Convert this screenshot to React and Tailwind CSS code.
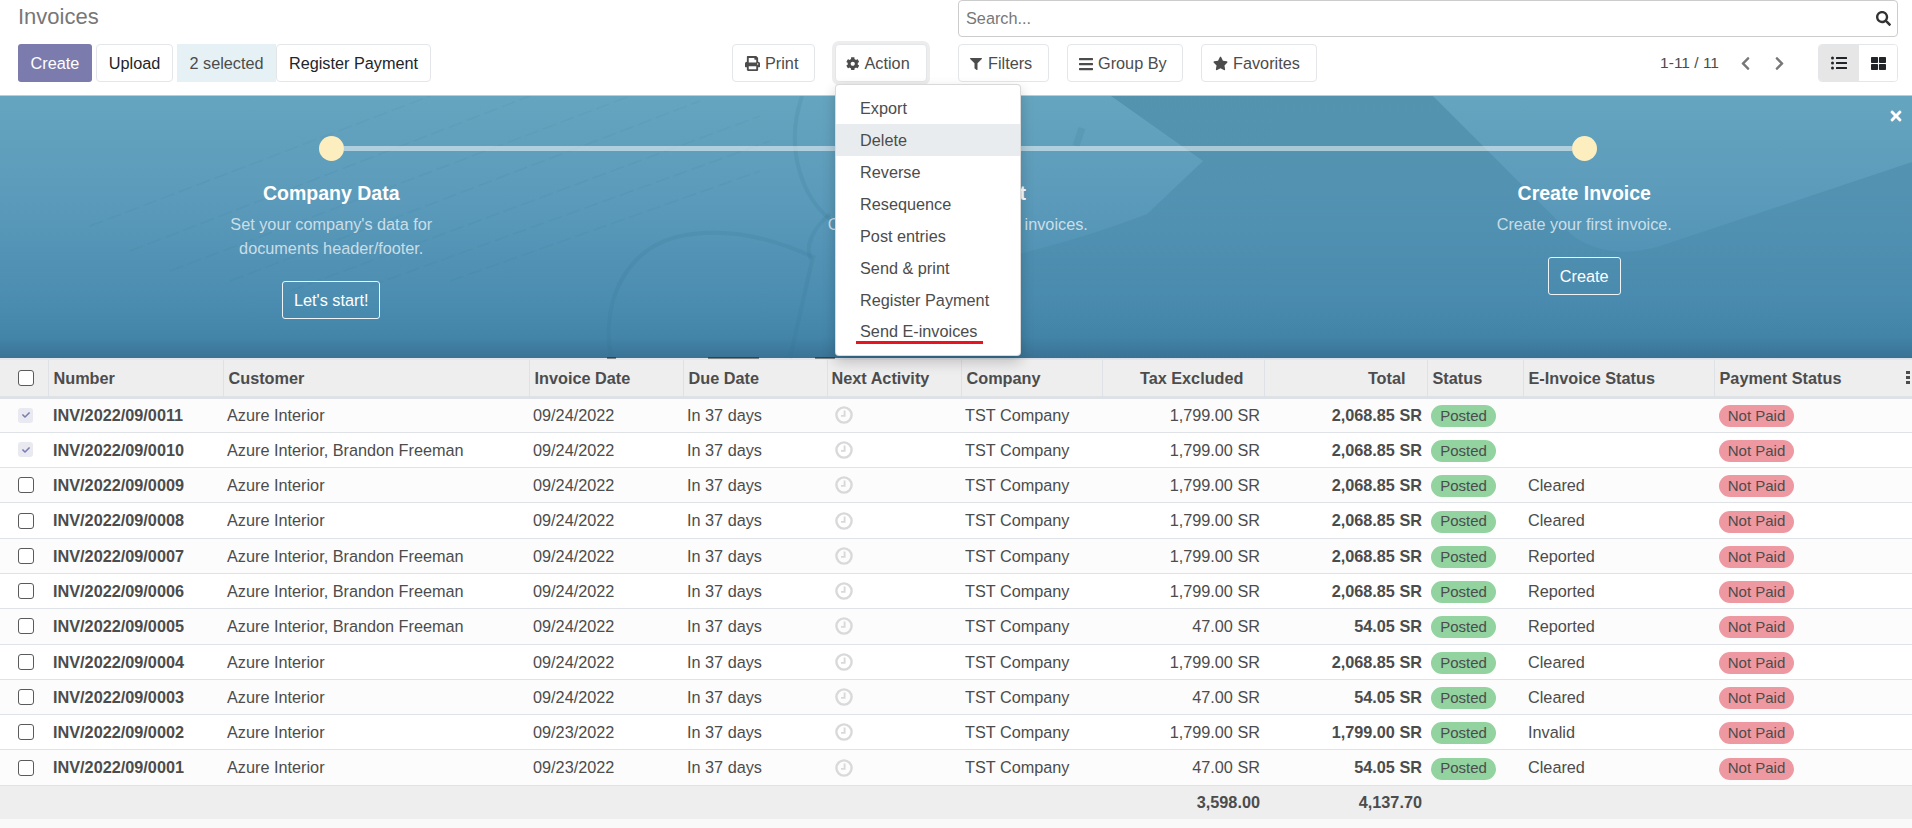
import React from 'react';
import {
  FaPrint, FaCog, FaFilter, FaBars, FaStar, FaSearch, FaChevronLeft, FaChevronRight,
  FaListUl, FaThLarge, FaTimes, FaCheck,
} from 'react-icons/fa';

const AZ = 'Azure Interior';
const AZB = 'Azure Interior, Brandon Freeman';

const invoices = [
  { no: '0011', customer: AZ, date: '09/24/2022', tax: '1,799.00', total: '2,068.85', einv: '', checked: true },
  { no: '0010', customer: AZB, date: '09/24/2022', tax: '1,799.00', total: '2,068.85', einv: '', checked: true },
  { no: '0009', customer: AZ, date: '09/24/2022', tax: '1,799.00', total: '2,068.85', einv: 'Cleared' },
  { no: '0008', customer: AZ, date: '09/24/2022', tax: '1,799.00', total: '2,068.85', einv: 'Cleared' },
  { no: '0007', customer: AZB, date: '09/24/2022', tax: '1,799.00', total: '2,068.85', einv: 'Reported' },
  { no: '0006', customer: AZB, date: '09/24/2022', tax: '1,799.00', total: '2,068.85', einv: 'Reported' },
  { no: '0005', customer: AZB, date: '09/24/2022', tax: '47.00', total: '54.05', einv: 'Reported' },
  { no: '0004', customer: AZ, date: '09/24/2022', tax: '1,799.00', total: '2,068.85', einv: 'Cleared' },
  { no: '0003', customer: AZ, date: '09/24/2022', tax: '47.00', total: '54.05', einv: 'Cleared' },
  { no: '0002', customer: AZ, date: '09/23/2022', tax: '1,799.00', total: '1,799.00', einv: 'Invalid' },
  { no: '0001', customer: AZ, date: '09/23/2022', tax: '47.00', total: '54.05', einv: 'Cleared' },
];

const actions = ['Export', 'Delete', 'Reverse', 'Resequence', 'Post entries', 'Send & print', 'Register Payment', 'Send E-invoices'];

const ToolButton = ({ children, className = '' }) => (
  <button className={`h-[38px] flex items-center pt-[1px] rounded-[4px] border border-[#e4e6e9] bg-white text-[#4c4c4c] ${className}`}>
    {children}
  </button>
);

const Clock = () => (
  <svg width="18" height="18" viewBox="0 0 18 18" fill="none" stroke="#d9d9d9">
    <circle cx="9" cy="9" r="7.6" strokeWidth="2.4" />
    <path d="M9.6 4.5V9.9H6" strokeWidth="1.9" />
  </svg>
);

const CheckBox = ({ checked }) =>
  checked ? (
    <span className="w-[15px] h-[15px] rounded-[3px] bg-[#e9e9f1] flex items-center justify-center text-[#7c7bad]">
      <FaCheck size={8} />
    </span>
  ) : (
    <span className="block w-[16px] h-[16px] rounded-[3px] border-[1.5px] border-[#5a5a5a] bg-white" />
  );

const Step = ({ title, lines, cta }) => (
  <div className="w-[626.5px] flex flex-col items-center text-center relative">
    <div className="w-[25px] h-[25px] rounded-full bg-[#fdeebf]" />
    <div className="mt-[20px] text-[19.5px] leading-[24px] font-bold text-white">{title}</div>
    <div className="mt-[7px] leading-[24px] text-white/70">
      {lines.map((l) => (
        <div key={l}>{l}</div>
      ))}
    </div>
    <button className="mt-[21px] h-[38px] px-[11px] rounded-[3px] border border-white/90 text-white">{cta}</button>
  </div>
);

const BannerArt = () => (
  <svg className="absolute inset-0" width="1912" height="263" viewBox="0 0 1912 263" fill="none">
    <defs>
      <linearGradient id="shade" x1="0" y1="0" x2="0" y2="1">
        <stop offset="0" stopColor="#2b6a88" stopOpacity="0.3" />
        <stop offset="0.75" stopColor="#2b6a88" stopOpacity="0.07" />
        <stop offset="1" stopColor="#2b6a88" stopOpacity="0.04" />
      </linearGradient>
    </defs>
    <path
      d="M1111 0L1203 65L1147 118Q1090 140 1019 158L960 263H1912V66L1660 150Q1610 165 1573 140L1433 0Z"
      fill="url(#shade)"
    />
    <g stroke="#2f6f8d" strokeOpacity="0.15" strokeWidth="4">
      <path d="M802 0C785 50 800 100 832 125" />
      <path d="M611 262C600 200 630 145 693 138C745 132 790 150 815 162" />
      <path d="M830 118C815 130 803 150 812 165L790 262" />
      <path d="M1082 32L1076 50" strokeWidth="7" />
    </g>
    <g stroke="#2f6f8d" strokeOpacity="0.07" strokeWidth="1.5" strokeDasharray="14 5">
      <path d="M90 130L430 0" />
      <path d="M130 155L530 0" />
      <path d="M170 175L630 0" />
      <path d="M230 185L700 5" />
      <path d="M290 195L760 20" />
      <path d="M370 190L770 45" />
      <path d="M450 185L760 75" />
    </g>
    <g stroke="#111" strokeOpacity="0.6" strokeWidth="1.5">
      <path d="M607 262H616M708 262H759M815 262H835" />
    </g>
  </svg>
);

const App = () => {
  return (
    <div className="h-[828px] overflow-hidden bg-[#f9f9f9] font-['Liberation_Sans',Arial,sans-serif] text-[16.25px] text-[#4c4c4c]">
      {/* control panel */}
      <div className="h-[96px] flex bg-white border-b border-[#c9c9c9] relative z-10">
        <div className="w-[958px] shrink-0 pl-[18px]">
          <div className="h-[44px] pt-[3px] text-[22px] leading-[27px] text-[#777]">Invoices</div>
          <div className="flex">
            <button className="h-[38px] w-[74px] pt-[1px] rounded-[3px] bg-[#7c7bad] text-white">Create</button>
            <ToolButton className="ml-[4px] w-[77px] justify-center text-[#212529]">Upload</ToolButton>
            <div className="ml-[4px] w-[99px] h-[38px] pt-[1px] flex items-center justify-center bg-[#e6f1f6]">2 selected</div>
            <ToolButton className="w-[155px] justify-center text-[#212529]">Register Payment</ToolButton>
            <ToolButton className="ml-[301px] w-[83px] pl-[12px] gap-[5px]">
              <FaPrint size={15} />
              Print
            </ToolButton>
            <div className="relative ml-[20px]">
              <ToolButton className="w-[92px] pl-[10px] gap-[5px] ring-[3px] ring-[#ededed]">
                <FaCog size={13.5} />
                Action
              </ToolButton>
              <div className="absolute left-0 top-[40px] w-[186px] py-[7px] bg-white rounded-[4px] border border-black/15 shadow-[0_6px_14px_rgba(0,0,0,0.2)]">
                {actions.map((a) =>
                  a === 'Send E-invoices' ? (
                    <div key={a} className="h-[32px] pb-[2px] flex items-center pl-[24px]">
                      <span className="relative">
                        {a}
                        <span className="absolute left-[-4px] top-[22px] w-[127px] h-[3px] bg-[#e8141f]" />
                      </span>
                    </div>
                  ) : (
                    <div key={a} className={`h-[32px] pt-[1px] flex items-center pl-[24px] ${a === 'Delete' ? 'bg-[#e9ecef]' : ''}`}>
                      {a}
                    </div>
                  ),
                )}
              </div>
            </div>
          </div>
        </div>
        <div className="flex-1 pr-[14px]">
          <div className="h-[37px] flex items-center justify-between pl-[7px] pr-[6px] rounded-[4px] border border-[#cccccc]">
            <span className="text-[#777]">Search...</span>
            <FaSearch size={15} className="text-[#333]" />
          </div>
          <div className="mt-[7px] flex items-center">
            <ToolButton className="w-[91px] pl-[11px] gap-[6px]">
              <FaFilter size={12} />
              Filters
            </ToolButton>
            <ToolButton className="ml-[18px] w-[116px] pl-[10px] gap-[4px]">
              <FaBars size={16} />
              Group By
            </ToolButton>
            <ToolButton className="ml-[18px] w-[116px] pl-[11px] gap-[5px]">
              <FaStar size={15} />
              Favorites
            </ToolButton>
            <span className="ml-auto text-[15.5px]">1-11 / 11</span>
            <FaChevronLeft size={15} className="ml-[19px] text-[#777]" />
            <FaChevronRight size={15} className="ml-[19px] text-[#777]" />
            <div className="ml-[31px] h-[38px] flex rounded-[4px] border border-[#e4e6e9] overflow-hidden text-[#212529]">
              <div className="w-[40px] flex items-center justify-center bg-[#e6e6e6]">
                <FaListUl size={16} />
              </div>
              <div className="w-[38px] flex items-center justify-center bg-white">
                <FaThLarge size={15} />
              </div>
            </div>
          </div>
        </div>
      </div>

      {/* onboarding banner */}
      <div className="relative h-[262px] pt-[40px] pl-[18px] flex bg-[linear-gradient(180deg,#66a5bf_0%,#5b9aba_40%,#4a8cb0_80%,#4385a9_92%,#3a7295_100%)]">
        <BannerArt />
        <div className="absolute left-[344px] top-[50px] w-[1228px] h-[5px] bg-white/50" />
        <Step title="Company Data" lines={["Set your company's data for", 'documents header/footer.']} cta="Let's start!" />
        <Step title="Invoice Layout" lines={['Customize the look of your invoices.']} cta="Customize" />
        <Step title="Create Invoice" lines={['Create your first invoice.']} cta="Create" />
        <FaTimes size={16} className="absolute right-[8px] top-[12px] text-white" />
      </div>

      {/* invoice table */}
      <table className="w-full table-fixed border-collapse border-t-2 border-[#e2e5e9]">
        <colgroup>
          <col className="w-[48px]" />
          <col className="w-[175px]" />
          <col className="w-[306px]" />
          <col className="w-[154px]" />
          <col className="w-[144px]" />
          <col className="w-[134px]" />
          <col className="w-[141px]" />
          <col className="w-[162px]" />
          <col className="w-[163px]" />
          <col className="w-[96px]" />
          <col className="w-[191px]" />
          <col />
        </colgroup>
        <thead>
          <tr className="h-[38px] bg-[#eeeeee] text-left border-b-[3px] border-[#dee2e6] [&>th]:border-r [&>th]:border-[#dee2e6] [&>th]:pl-[5px] [&>th]:font-bold">
            <th className="!pl-[18px]">
              <CheckBox />
            </th>
            <th>Number</th>
            <th>Customer</th>
            <th>Invoice Date</th>
            <th>Due Date</th>
            <th className="!pl-[4px]">Next Activity</th>
            <th>Company</th>
            <th className="text-right pr-[20px]">Tax Excluded</th>
            <th className="text-right pr-[21px]">Total</th>
            <th>Status</th>
            <th>E-Invoice Status</th>
            <th className="!border-r-0">
              <div className="flex items-center justify-between">
                Payment Status
                <svg width="5" height="14" viewBox="0 0 5 14" fill="#4c4c4c" className="mr-[1px]">
                  <rect width="4" height="3" />
                  <rect y="5" width="4" height="3" />
                  <rect y="10" width="4" height="3" />
                </svg>
              </div>
            </th>
          </tr>
        </thead>
        <tbody>
          {invoices.map((inv) => (
            <tr key={inv.no} className="h-[35.3px] odd:bg-[#fcfcfc] even:bg-white border-b border-[#dfe2e7] [&>td]:pl-[4px]">
              <td className="!pl-[18px]">
                <CheckBox checked={inv.checked} />
              </td>
              <td className="font-bold !pl-[5px]">INV/2022/09/{inv.no}</td>
              <td>{inv.customer}</td>
              <td>{inv.date}</td>
              <td>In 37 days</td>
              <td className="!pl-[8px]">
                <Clock />
              </td>
              <td>{inv.tax && 'TST Company'}</td>
              <td className="text-right pr-[4px]">{inv.tax} SR</td>
              <td className="text-right pr-[5px] font-bold">{inv.total} SR</td>
              <td>
                <span className="inline-flex h-[22px] w-[65px] items-center justify-center rounded-full bg-[#92d3a0] text-[15px]">Posted</span>
              </td>
              <td className="!pl-[5px]">{inv.einv}</td>
              <td className="!pl-[5px]">
                <span className="inline-flex h-[22px] w-[75px] items-center justify-center rounded-full bg-[#ee99a2] text-[15px]">Not Paid</span>
              </td>
            </tr>
          ))}
        </tbody>
        <tfoot>
          <tr className="h-[34px] bg-[#eeeeee] font-bold">
            <td colSpan={7} />
            <td className="text-right pr-[4px]">3,598.00</td>
            <td className="text-right pr-[5px]">4,137.70</td>
            <td colSpan={3} />
          </tr>
        </tfoot>
      </table>
    </div>
  );
};

export default App;
